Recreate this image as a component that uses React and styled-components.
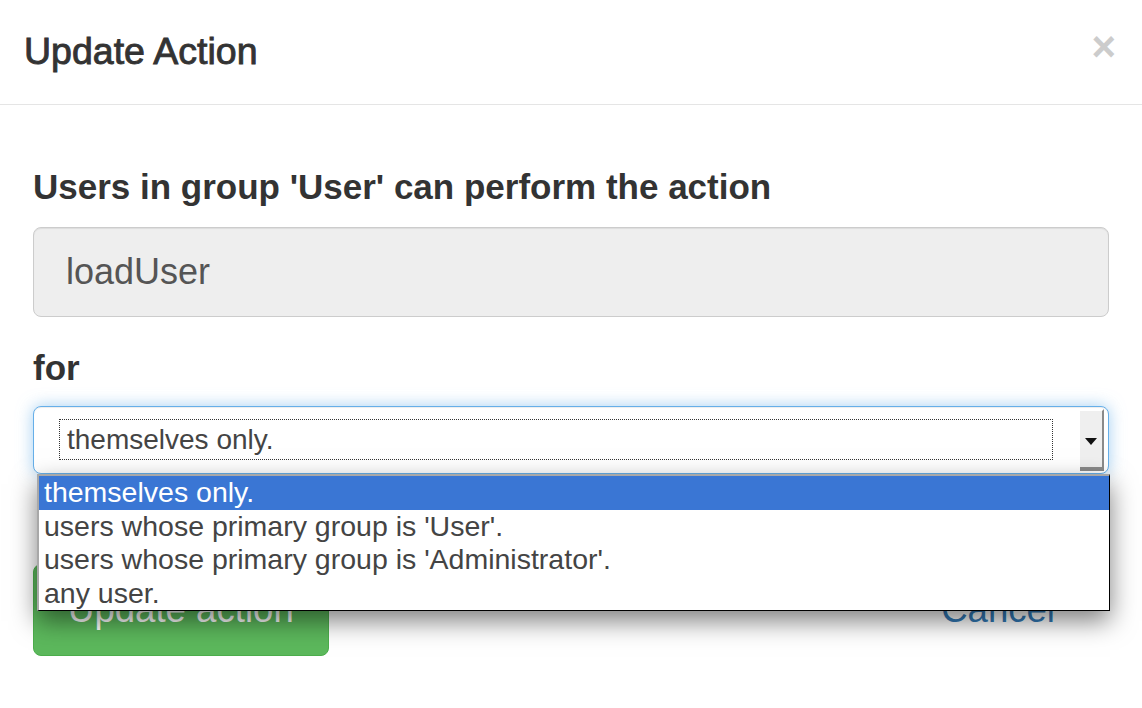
import React from 'react';
import styled, { createGlobalStyle } from 'styled-components';

const GlobalStyle = createGlobalStyle`
  html, body {
    margin: 0;
    padding: 0;
    background: #fff;
  }
  body {
    font-family: "Liberation Sans", Arial, Helvetica, sans-serif;
    color: #333;
  }
`;

const Modal = styled.div`
  width: 1142px;
  height: 708px;
  overflow: hidden;
  background: #fff;
`;

const Header = styled.div`
  display: flex;
  justify-content: space-between;
  align-items: flex-start;
  height: 105px;
  box-sizing: border-box;
  padding: 31px 26px 0 24px;
  border-bottom: 1px solid #e5e5e5;
`;

const Title = styled.h4`
  margin: 0;
  font-size: 37.5px;
  line-height: 40px;
  font-weight: 400;
  -webkit-text-stroke: 0.9px #333;
  color: #333;
`;

const Close = styled.button`
  margin-top: -5px;
  padding: 0;
  border: 0;
  background: none;
  font-family: "Liberation Sans", Arial, sans-serif;
  font-size: 42px;
  line-height: 1;
  font-weight: 700;
  color: #ccc;
  cursor: pointer;
`;

const Body = styled.div`
  padding: 58px 33px 0 33px;
`;

const Label = styled.label`
  display: block;
  font-size: 35px;
  line-height: 48px;
  font-weight: 700;
  color: #333;
  margin-bottom: ${(p) => p.$gap || 16}px;
`;

const ReadOnly = styled.div`
  height: 90px;
  box-sizing: border-box;
  display: flex;
  align-items: center;
  padding: 0 32px;
  border: 1px solid #ccc;
  border-radius: 8px;
  background: #eee;
  box-shadow: inset 0 1px 1px rgba(0, 0, 0, 0.075);
  font-size: 36px;
  color: #555;
  margin-bottom: 27px;
`;

const SelectWrap = styled.div`
  position: relative;
`;

const SelectBox = styled.div`
  display: flex;
  height: 68px;
  box-sizing: border-box;
  border: 1px solid #66afe9;
  border-radius: 8px;
  background: #fff;
  box-shadow: inset 0 1px 1px rgba(0, 0, 0, 0.075), 0 0 16px rgba(102, 175, 233, 0.6);
`;

const Field = styled.div`
  flex: 1;
  display: flex;
  padding: 12px 27px 13px 25px;
`;

const FocusRing = styled.div`
  flex: 1;
  display: flex;
  align-items: center;
  padding-left: 7px;
  border: 1px dotted #333;
  font-size: 28px;
  color: #444;
`;

const Arrow = styled.div`
  width: 24px;
  margin: 2px 4px 2px 0;
  display: flex;
  align-items: center;
  justify-content: center;
  background: #efefef;
  border-right: 2px solid #8a8a8a;
  border-bottom: 4px solid #8a8a8a;
  border-top: 2px solid #fff;
  box-sizing: border-box;
`;

const Triangle = styled.span`
  width: 0;
  height: 0;
  border-left: 6px solid transparent;
  border-right: 6px solid transparent;
  border-top: 7px solid #111;
  margin-top: 4px;
`;

const List = styled.ul`
  position: absolute;
  top: 68px;
  left: 4px;
  width: 1073px;
  margin: 0;
  padding: 0;
  list-style: none;
  background: #fff;
  border-top: 2px solid #a8a8a8;
  border-left: 2px solid #a8a8a8;
  border-right: 1px solid #000;
  border-bottom: 1px solid #000;
  box-sizing: border-box;
  box-shadow: 0 10px 24px rgba(0, 0, 0, 0.5);
  z-index: 2;
`;

const Option = styled.li`
  height: 33.5px;
  display: flex;
  align-items: center;
  padding-left: 5px;
  font-size: 28.5px;
  color: ${(p) => (p.$active ? '#fff' : '#444')};
  background: ${(p) => (p.$active ? '#3a76d4' : '#fff')};
`;

const Footer = styled.div`
  display: flex;
  justify-content: space-between;
  align-items: center;
  margin-top: 90px;
  padding-right: 19px;
`;

const Button = styled.button`
  height: 92px;
  padding: 0 34px;
  font-family: "Liberation Sans", Arial, sans-serif;
  font-size: 36.6px;
  border-radius: 8px;
  cursor: pointer;
  color: ${(p) => (p.$link ? '#337ab7' : '#fff')};
  background: ${(p) => (p.$link ? 'transparent' : '#5cb85c')};
  border: 1px solid ${(p) => (p.$link ? 'transparent' : '#4cae4c')};
`;

const options = [
  'themselves only.',
  "users whose primary group is 'User'.",
  "users whose primary group is 'Administrator'.",
  'any user.',
];

const App = () => {
  return (
    <Modal>
      <GlobalStyle />
      <Header>
        <Title>Update Action</Title>
        <Close>×</Close>
      </Header>
      <Body>
        <Label>Users in group 'User' can perform the action</Label>
        <ReadOnly>loadUser</ReadOnly>
        <Label $gap={14}>for</Label>
        <SelectWrap>
          <SelectBox>
            <Field>
              <FocusRing>themselves only.</FocusRing>
            </Field>
            <Arrow>
              <Triangle />
            </Arrow>
          </SelectBox>
          <List>
            {options.map((o, i) => (
              <Option key={o} $active={i === 0}>
                {o}
              </Option>
            ))}
          </List>
        </SelectWrap>
        <Footer>
          <Button>Update action</Button>
          <Button $link>Cancel</Button>
        </Footer>
      </Body>
    </Modal>
  );
};

export default App;
